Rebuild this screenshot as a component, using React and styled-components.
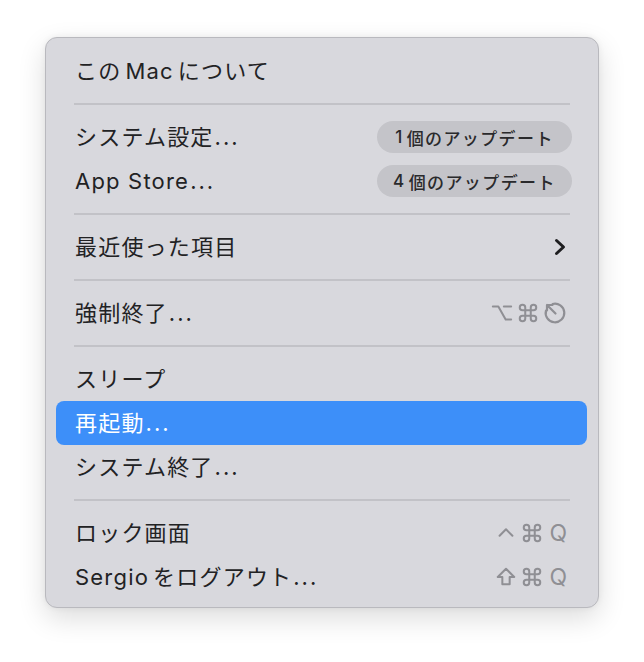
import React from 'react';
import styled, { createGlobalStyle } from 'styled-components';

const GlobalStyle = createGlobalStyle`
	html, body {
		margin: 0;
		padding: 0;
		background: #ffffff;
	}
	* {
		box-sizing: border-box;
	}
`;

const Page = styled.div`
	width: 644px;
	height: 662px;
	padding: 37px 0 0 45px;
	font-family: Inter, 'Noto Sans CJK JP', sans-serif;
`;

const Menu = styled.div`
	width: 554px;
	background: #d8d8dd;
	border: 1px solid #b9b9be;
	border-radius: 12px;
	padding: 11px 11px 8px 10px;
	box-shadow: 0 10px 28px rgba(0, 0, 0, 0.14), 0 0 6px rgba(0, 0, 0, 0.06);
	display: flex;
	flex-direction: column;
`;

const Row = styled.div`
	height: 44px;
	display: flex;
	align-items: center;
	justify-content: space-between;
	padding: 0 20px 0 19px;
	border-radius: 8px;
	font-size: 22px;
	color: ${(p) => (p.$active ? '#ffffff' : '#222224')};
	background: ${(p) => (p.$active ? '#3d8ff9' : 'transparent')};
`;

const Label = styled.span`
	line-height: 1;
	letter-spacing: 1.2px;
`;

const Gap = styled.span`
	margin-left: ${(p) => p.$w || 5}px;
`;

const Dots = styled.span`
	letter-spacing: 2px;
	margin-left: 1px;
`;

const Separator = styled.div`
	height: 22px;
	padding: 10px 17px 0 18px;
	&::after {
		content: '';
		display: block;
		height: 2px;
		background: #c2c2c7;
	}
`;

const Badge = styled.span`
	width: 195px;
	height: 32px;
	margin-right: -5px;
	border-radius: 16px;
	background: #c4c4c9;
	color: #2a2a2c;
	font-size: 17px;
	font-weight: 500;
	letter-spacing: 1.4px;
	display: flex;
	align-items: center;
	justify-content: center;
`;

const Shortcut = styled.span`
	display: flex;
	align-items: center;
	gap: 4px;
	color: #8f8f94;
	font-size: 22px;
	line-height: 1;
`;

const Key = styled.svg`
	width: ${(p) => p.$size || 22}px;
	height: ${(p) => p.$size || 22}px;
	fill: none;
	stroke: currentColor;
	stroke-width: 2.2;
	stroke-linecap: round;
	stroke-linejoin: round;
`;

const Chevron = styled.svg`
	width: 12px;
	height: 18px;
	fill: none;
	stroke: #1e1e20;
	stroke-width: 3;
	stroke-linecap: round;
	stroke-linejoin: round;
	margin-right: 1px;
`;

const Command = () => (
	<Key viewBox="0 0 24 24">
		<path d="M15 6v12a3 3 0 1 0 3-3H6a3 3 0 1 0 3 3V6a3 3 0 1 0-3 3h12a3 3 0 1 0-3-3" />
	</Key>
);

const Option = () => (
	<Key viewBox="0 0 24 24">
		<path d="M2 5h6l8 14h6M14 5h8" />
	</Key>
);

const Escape = () => (
	<Key viewBox="0 0 24 24" $size={24}>
		<path d="M3 9.6A9.3 9.3 0 1 0 9.6 3" />
		<path d="M12.5 12.5L4 4M4 9.5V4H9.5" />
	</Key>
);

const Control = () => (
	<Key viewBox="0 0 24 24">
		<path d="M5 15l7-7 7 7" />
	</Key>
);

const Shift = () => (
	<Key viewBox="0 0 24 24">
		<path d="M12 3L3 12h5v8h8v-8h5z" />
	</Key>
);

const Q = styled.span`
	font-family: Inter, sans-serif;
	font-size: 23px;
	margin-left: 2px;
`;

export default function App() {
	return (
		<Page>
			<GlobalStyle />
			<Menu>
				<Row>
					<Label>
						この<Gap $w={4} />Mac<Gap $w={4} />について
					</Label>
				</Row>
				<Separator />
				<Row>
					<Label>
						システム設定<Dots>...</Dots>
					</Label>
					<Badge>
						1<Gap $w={3} />個のアップデート
					</Badge>
				</Row>
				<Row>
					<Label>
						App Store<Dots>...</Dots>
					</Label>
					<Badge>
						4<Gap $w={3} />個のアップデート
					</Badge>
				</Row>
				<Separator />
				<Row>
					<Label>最近使った項目</Label>
					<Chevron viewBox="0 0 12 18">
						<path d="M2.5 2.5L9.5 9l-7 6.5" />
					</Chevron>
				</Row>
				<Separator />
				<Row>
					<Label>
						強制終了<Dots>...</Dots>
					</Label>
					<Shortcut>
						<Option />
						<Command />
						<Escape />
					</Shortcut>
				</Row>
				<Separator />
				<Row>
					<Label>スリープ</Label>
				</Row>
				<Row $active>
					<Label>
						再起動<Dots>...</Dots>
					</Label>
				</Row>
				<Row>
					<Label>
						システム終了<Dots>...</Dots>
					</Label>
				</Row>
				<Separator />
				<Row>
					<Label>ロック画面</Label>
					<Shortcut>
						<Control />
						<Command />
						<Q>Q</Q>
					</Shortcut>
				</Row>
				<Row>
					<Label>
						Sergio<Gap $w={4} />をログアウト<Dots>...</Dots>
					</Label>
					<Shortcut>
						<Shift />
						<Command />
						<Q>Q</Q>
					</Shortcut>
				</Row>
			</Menu>
		</Page>
	);
}
